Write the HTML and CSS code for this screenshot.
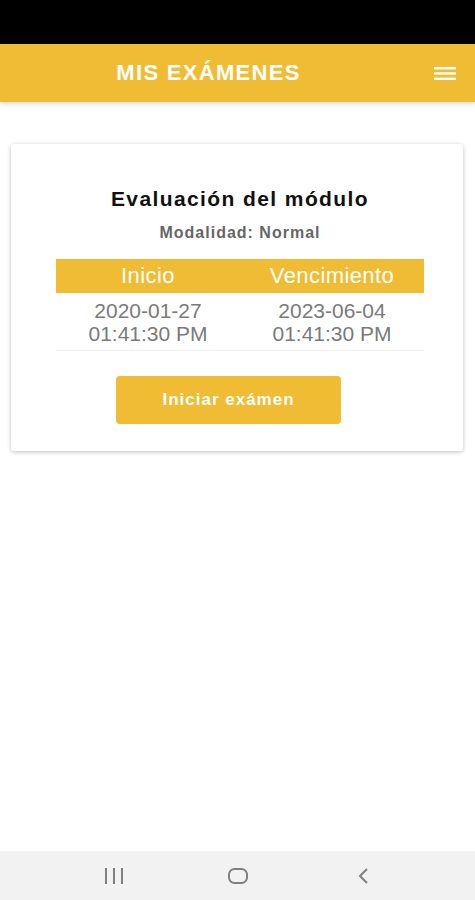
FILE: index.html
```html
<html>

<head>
   <title>Mis exámenes</title>
   <meta charset="utf-8">
   <link rel="stylesheet" href="styles.css">
</head>

<body>
   <div class="status-bar"></div>

   <header class="topbar">
      <h1 class="topbar-title">MIS EXÁMENES</h1>
      <button class="menu-btn" aria-label="menu">
         <svg width="22" height="13" viewBox="0 0 22 13">
            <rect x="0" y="0" width="22" height="2.4" fill="#fff" />
            <rect x="0" y="5.3" width="22" height="2.4" fill="#fff" />
            <rect x="0" y="10.6" width="22" height="2.4" fill="#fff" />
         </svg>
      </button>
   </header>

   <main class="content">
      <div class="card">
         <h2 class="card-title">Evaluación del módulo</h2>
         <p class="card-mode">Modalidad: Normal</p>

         <table class="dates">
            <thead>
               <tr>
                  <th>Inicio</th>
                  <th>Vencimiento</th>
               </tr>
            </thead>
            <tbody>
               <tr>
                  <td>2020-01-27<br>01:41:30 PM</td>
                  <td>2023-06-04<br>01:41:30 PM</td>
               </tr>
            </tbody>
         </table>

         <div class="actions">
            <button class="btn-start">Iniciar exámen</button>
         </div>
      </div>
   </main>

   <nav class="navbar">
      <svg width="24" height="18" viewBox="0 0 24 18">
         <rect x="3" y="1" width="2" height="16" fill="#808080" />
         <rect x="11" y="1" width="2" height="16" fill="#808080" />
         <rect x="19" y="1" width="2" height="16" fill="#808080" />
      </svg>
      <svg width="24" height="18" viewBox="0 0 24 18">
         <rect x="3" y="2" width="18" height="14" rx="5.5" fill="none" stroke="#808080" stroke-width="2" />
      </svg>
      <svg width="24" height="18" viewBox="0 0 24 18">
         <path d="M17 2 L10 9 L17 16" fill="none" stroke="#808080" stroke-width="2" />
      </svg>
   </nav>
</body>

</html>
```

FILE: styles.css
```css
body {
   margin: 0;
   width: 475px;
   height: 900px;
   display: flex;
   flex-direction: column;
   background: #fff;
   font-family: "Liberation Sans", Arial, sans-serif;
   overflow: hidden;
}

.status-bar {
   height: 44px;
   background: #000;
}

.topbar {
   height: 58px;
   display: flex;
   align-items: center;
   background: #f0bc34;
   box-shadow: 0 2px 4px rgba(0, 0, 0, .15);
}

.topbar-title {
   flex: 1;
   margin: 0;
   text-align: center;
   color: #fff;
   font-size: 22px;
   font-weight: 700;
   letter-spacing: 1.3px;
}

.menu-btn {
   width: 55px;
   height: 58px;
   margin-right: 3px;
   padding: 0;
   border: 0;
   background: none;
   display: flex;
   align-items: center;
   justify-content: center;
}

.content {
   flex: 1;
   padding: 42px 12px 0 11px;
}

.card {
   background: #fff;
   border-radius: 3px;
   box-shadow: 0 1px 4px rgba(0, 0, 0, .25);
   padding: 41px 39px 27px 45px;
}

.card-title {
   margin: 0;
   text-align: center;
   font-size: 21px;
   font-weight: 700;
   color: #111;
   line-height: 28px;
   letter-spacing: 1.4px;
}

.card-mode {
   margin: 11px 0 0;
   text-align: center;
   font-size: 16px;
   font-weight: 700;
   color: #666;
   line-height: 18px;
   letter-spacing: 1px;
}

.dates {
   width: 100%;
   margin-top: 17px;
   border-collapse: collapse;
   table-layout: fixed;
}

.dates th {
   background: #f0bc34;
   color: #fff;
   font-size: 22px;
   font-weight: 400;
   height: 34px;
   padding: 0;
   letter-spacing: .4px;
}

.dates td {
   text-align: center;
   color: #7a7a7a;
   font-size: 21px;
   line-height: 23px;
   padding: 6px 0 5px;
   border-bottom: 1px solid #f0f0f0;
}

.actions {
   display: flex;
   justify-content: center;
   margin-top: 25px;
   padding-right: 23px;
}

.btn-start {
   width: 225px;
   height: 48px;
   border: 0;
   border-radius: 4px;
   background: #f0bc34;
   color: #fff;
   font-family: "Liberation Sans", Arial, sans-serif;
   font-size: 17px;
   font-weight: 700;
   letter-spacing: 1px;
}

.navbar {
   height: 49px;
   background: #f2f2f2;
   display: flex;
   align-items: center;
   justify-content: center;
   gap: 100px;
}
```
